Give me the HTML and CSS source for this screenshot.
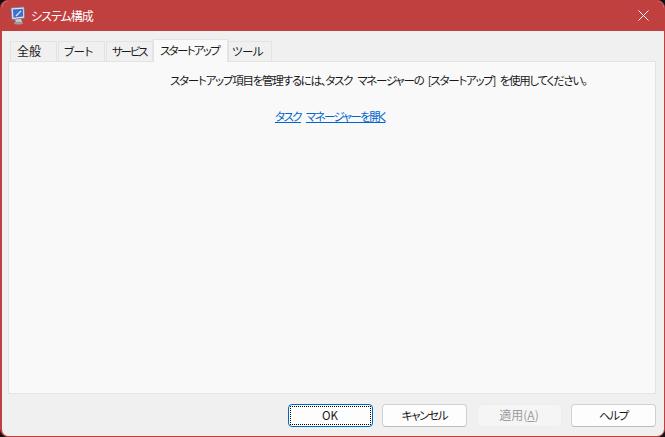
FILE: index.html
```html
<!DOCTYPE html>
<html lang="ja">

<head>
    <meta charset="UTF-8">
    <title>システム構成</title>
    <link rel="stylesheet" href="styles.css">
</head>

<body>
    <div class="window">
        <div class="title-bar">
            <svg class="app-icon" width="22" height="22" viewBox="0 0 22 22">
                <path d="M3 4 L16 3 L16.500 14 L4 15.500 Z" fill="#e4e8f2" stroke="#6a7a9c" stroke-width="0.7"/>
                <path d="M4.800 5.500 L14.800 4.700 L15.200 12.600 L5.500 13.700 Z" fill="#3d6fd0"/>
                <path d="M7.500 11.500 L12.500 6.500 L13.300 7.500 L8.500 12.500 Z" fill="#d5e5ff"/>
                <path d="M7 15.500 L13 15 L14 18 L8 18.500 Z" fill="#cfcfcf"/>
                <ellipse cx="10.500" cy="19" rx="4.500" ry="1.500" fill="#9a9a9a"/>
            </svg>
            <div class="title-text">システム構成</div>
            <svg class="close-icon" width="11" height="11" viewBox="0 0 11 11">
                <path d="M0.500 0.500 L10.500 10.500 M10.500 0.500 L0.500 10.500" stroke="#fff" stroke-width="1" fill="none"/>
            </svg>
        </div>
        <div class="content">
            <div class="tabs">
                <div class="tab tab-general">全般</div>
                <div class="tab tab-boot">ブート</div>
                <div class="tab tab-services">サービス</div>
                <div class="tab tab-active">スタートアップ</div>
                <div class="tab tab-tools">ツール</div>
            </div>
            <div class="panel">
                <div class="message">スタートアップ項目を管理するには、タスク<span class="word-gap"></span>マネージャーの [スタートアップ] を使用してください。</div>
                <a class="open-link" href="#">タスク<span class="word-gap"></span>マネージャーを開く</a>
            </div>
            <div class="footer">
                <button class="btn btn-default"><span class="focus-ring">OK</span></button>
                <button class="btn btn-kana">キャンセル</button>
                <button class="btn btn-disabled">適用(<u>A</u>)</button>
                <button class="btn btn-kana">ヘルプ</button>
            </div>
        </div>
    </div>
</body>

</html>
```

FILE: styles.css
```css
html,
body {
    width: 665px;
    height: 437px;
    margin: 0;
    padding: 0;
    overflow: hidden;
    background-color: #111;
}

body {
    font-family: "Noto Sans CJK JP", "Noto Sans", sans-serif;
    font-size: 11.5px;
    font-feature-settings: "palt";
    color: #1a1a1a;
    white-space: nowrap;
}

.window {
    width: 665px;
    height: 437px;
    box-sizing: border-box;
    border: 1px solid #c04040;
    border-left-width: 2px;
    border-radius: 8px;
    background-color: #f0f0f0;
    overflow: hidden;
    display: flex;
    flex-direction: column;
}

.title-bar {
    height: 30px;
    flex: none;
    background-color: #c04040;
    color: #fff;
    display: flex;
    align-items: center;
    padding: 0 15px 2px 6px;
    box-sizing: border-box;
}

.app-icon {
    margin-right: 1px;
}

.title-text {
    flex: 1;
    font-size: 12px;
    letter-spacing: -1px;
}

.content {
    flex: 1;
    display: flex;
    flex-direction: column;
    padding: 0 8px 0 6px;
}

.tabs {
    height: 30px;
    flex: none;
    display: flex;
    align-items: flex-end;
    padding-left: 2px;
    position: relative;
    z-index: 1;
}

.tab {
    height: 20px;
    box-sizing: border-box;
    border: 1px solid #e3e3e3;
    border-bottom: none;
    margin-right: 1px;
    background-color: #f0f0f0;
    padding: 0 0 0 5px;
    line-height: 18px;
    letter-spacing: -1.5px;
}

.tab-general {
    width: 47px;
    padding-left: 6px;
    font-size: 12px;
    letter-spacing: 0;
}

.tab-boot {
    width: 47px;
    letter-spacing: -0.5px;
}

.tab-services {
    width: 47px;
    margin-right: 0;
    letter-spacing: -2.2px;
}

.tab-active {
    width: 75px;
    height: 23px;
    margin-bottom: -1px;
    margin-right: 0;
    padding-left: 6px;
    background-color: #f9f9f9;
    line-height: 20px;
    padding-bottom: 3px;
    letter-spacing: -1.7px;
}

.tab-tools {
    width: 44px;
    padding-left: 3px;
    letter-spacing: -0.5px;
}

.panel {
    flex: 1;
    border: 1px solid #e3e3e3;
    background-color: #f9f9f9;
    padding: 9px 0 0 161px;
}

.message {
    line-height: 18px;
    letter-spacing: -1.25px;
    word-spacing: 3px;
}

.word-gap {
    display: inline-block;
    width: 5px;
}

.open-link {
    display: inline-block;
    margin: 18px 0 0 105px;
    line-height: 18px;
    letter-spacing: -1.6px;
    color: #0066cc;
}

.footer {
    height: 42px;
    flex: none;
    display: flex;
    justify-content: flex-end;
    align-items: flex-start;
    gap: 9.5px;
    padding-top: 10px;
    box-sizing: border-box;
}

.btn {
    width: 85px;
    height: 23px;
    padding: 0 0 2px;
    border: 1px solid #d0d0d0;
    border-bottom-color: #bcbcbc;
    border-radius: 4px;
    background-color: #fdfdfd;
    font: inherit;
    font-feature-settings: "palt";
    color: #1a1a1a;
}

.btn-kana {
    letter-spacing: -1.3px;
}

.btn-default {
    border: 1px solid #0067c0;
    padding: 1px;
}

.focus-ring {
    display: block;
    height: 100%;
    box-sizing: border-box;
    border: 1px dotted #000;
    line-height: 16px;
}

.btn-disabled {
    font-size: 12px;
    background-color: #f5f5f5;
    border-color: #ededed;
    color: #9c9c9c;
}
```
